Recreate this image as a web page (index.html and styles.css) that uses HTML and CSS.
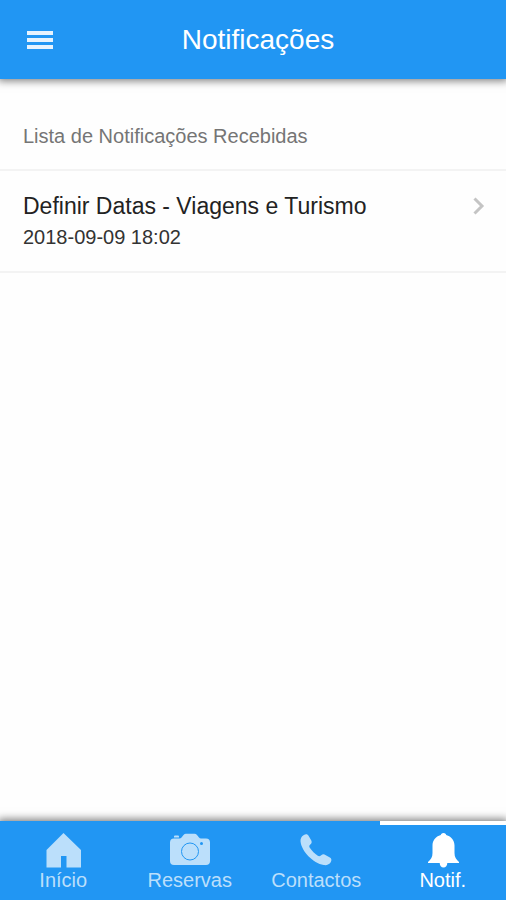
FILE: index.html
```html
<!DOCTYPE html>
<html lang="pt">
<head>
<meta charset="utf-8">
<meta name="viewport" content="width=device-width, initial-scale=1">
<title>Notificações</title>
<link rel="stylesheet" href="styles.css">
</head>
<body>
<header class="toolbar">
  <button class="menu" type="button" aria-label="Menu">
    <svg width="26" height="18" viewBox="0 0 26 18" aria-hidden="true"><path d="M0 0h26v4H0zM0 7h26v4H0zM0 14h26v4H0z"/></svg>
  </button>
  <h1 class="title">Notificações</h1>
</header>
<main class="content">
  <h2 class="list-header">Lista de Notificações Recebidas</h2>
  <ul class="list">
    <li>
      <a class="item" href="#">
        <span class="item-text">
          <span class="item-title">Definir Datas - Viagens e Turismo</span>
          <span class="item-date">2018-09-09 18:02</span>
        </span>
        <svg class="chevron" width="12" height="18" viewBox="0 0 12 18" aria-hidden="true"><path d="M1.500 1.500L9 9l-7.500 7.500"/></svg>
      </a>
    </li>
  </ul>
</main>
<nav class="tabs">
  <a class="tab" href="#">
    <svg class="icon" width="42" height="36" viewBox="0 0 42 36" aria-hidden="true"><path d="M21.500 1L39 18v17.500H24.500V24H19v11.500H4.500V18z"/></svg>
    <span>Início</span>
  </a>
  <a class="tab" href="#">
    <svg class="icon" width="42" height="36" viewBox="0 0 42 36" aria-hidden="true">
      <path fill-rule="evenodd" d="M5 4.500Q5 3.500 6 3.500h3q1 0 1 1V5.500H5zM5 6.500h5.500q1.200 0 2-1l2-2.500q1-1.300 2.500-1.300h8.500q1.500 0 2.500 1.300l2 2.500q.8 1 2 1h5q4 0 4 4V29q0 4-4 4H5q-4 0-4-4V10.500q0-4 4-4zM32.500 10a1.500 1.500 0 1 0 0 3 1.500 1.500 0 0 0 0-3z"/>
      <circle class="lens" cx="21" cy="19.500" r="8.500"/>
    </svg>
    <span>Reservas</span>
  </a>
  <a class="tab" href="#">
    <svg class="icon" width="42" height="36" viewBox="0 0 42 36" aria-hidden="true"><path d="M8.500 3.200C11 1.700 12.700 2.200 13.700 4l2.600 4.500c.8 1.600.3 3-1 4-1.200 1.100-1.300 2-.5 3.300 2.200 3.200 4.900 6 8 8 1.200.8 2 .6 3.400-.5 1.200-1 2.600-1.300 4.200-.4l4.500 2.700c1.700 1 2 2.600.8 4.700-1.200 2-4 3.300-7 2.700C18 31 6.500 19.500 5.500 9.200c-.2-2.500 1-4.800 3-6z"/></svg>
    <span>Contactos</span>
  </a>
  <a class="tab active" href="#" aria-current="page">
    <svg class="icon" width="42" height="36" viewBox="0 0 42 36" aria-hidden="true"><path d="M21.500 1c1.800 0 2.500 1 2.700 2C29.500 4.500 32.500 8.500 32.500 13.500V21c0 4 1.500 6 4.500 9v1H25.300c0 2.500-1.500 4.500-3.800 4.500S17.700 33.500 17.700 31H6v-1c3-3 4.500-5 4.500-9v-7.500c0-5 3-9 8.300-10.500C19 2 19.700 1 21.500 1z"/></svg>
    <span>Notif.</span>
  </a>
</nav>
</body>
</html>
```
FILE: styles.css
```css
* {
  box-sizing: border-box;
}

body {
  margin: 0;
  min-height: 100vh;
  display: flex;
  flex-direction: column;
  background: #fefefe;
  color: #222;
  font-family: "Liberation Sans", Arial, sans-serif;
  font-size: 20px;
  line-height: 24px;
}

a {
  color: inherit;
  text-decoration: none;
}

.toolbar {
  display: grid;
  grid-template-columns: 80px 1fr 70px;
  align-items: center;
  padding: 24px 0 23px;
  background: #2196f3;
  color: #fff;
  box-shadow: 0 0 8px 2px rgba(0, 0, 0, 0.5);
}

.menu {
  display: flex;
  justify-content: center;
  padding: 0;
  border: 0;
  background: none;
  fill: #e6f3fe;
}

.title {
  margin: 0;
  font-size: 28px;
  line-height: 32px;
  font-weight: 400;
  text-align: center;
}

.content {
  flex: 1;
}

.list-header {
  margin: 0;
  padding: 45px 23px 21px;
  border-bottom: 2px solid #f3f3f3;
  color: #757575;
  font-size: 20px;
  font-weight: 400;
}

.list {
  margin: 0;
  padding: 0;
  list-style: none;
}

.item {
  display: flex;
  justify-content: space-between;
  align-items: flex-start;
  padding: 20px 21px 22px 23px;
  border-bottom: 2px solid #f3f3f3;
}

.item-text {
  display: flex;
  flex-direction: column;
  gap: 4px;
}

.item-title {
  font-size: 23px;
  line-height: 30px;
}

.item-date {
  color: #333;
}

.chevron {
  margin-top: 6px;
  fill: none;
  stroke: #c4c4c4;
  stroke-width: 3px;
}

.tabs {
  display: grid;
  grid-template-columns: repeat(4, 1fr);
  background: #2196f3;
  box-shadow: 0 0 8px 2px rgba(0, 0, 0, 0.5);
}

.tab {
  display: flex;
  flex-direction: column;
  align-items: center;
  padding: 7px 0 8px;
  border-top: 4px solid transparent;
  color: #bbdffb;
}

.tab.active {
  border-top-color: #fff;
  color: #fff;
}

.icon {
  fill: currentColor;
}

.lens {
  stroke: #2196f3;
  stroke-width: 1px;
}
```
